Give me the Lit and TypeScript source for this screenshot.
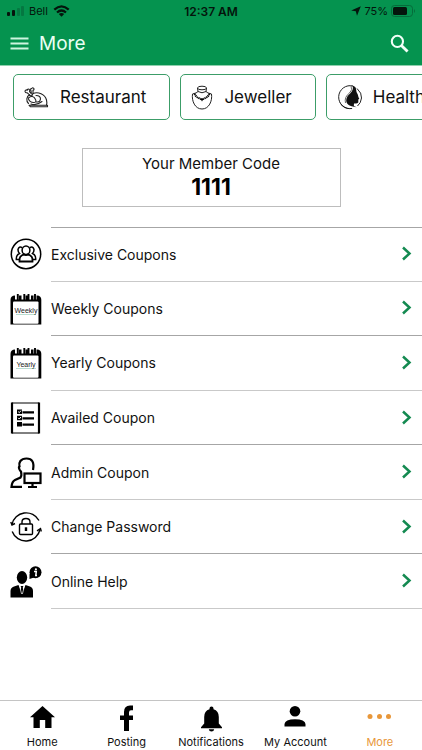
import { LitElement, html, css, svg } from "lit";
import { customElement } from "lit/decorators.js";
import { classMap } from "lit/directives/class-map.js";

const line = (body: unknown, w = 32, h = 32) =>
  html`<svg width=${w} height=${h} viewBox="0 0 ${w} ${h}" aria-hidden="true">${body}</svg>`;

const calendar = (word: string) => line(svg`
  <path d="M0.500 7Q0.500 2.500 5 2.500H27Q31.300 2.500 31.300 7V31.500H0.500Z" fill="#000"/>
  <rect x="3" y="8.500" width="25.500" height="22.300" rx="1" fill="#fff"/>
  <path d="M5 1H9V6.500H5ZM11.500 1H15.500V6.500H11.500ZM18 1H21V6.500H18ZM23.500 1H26.500V6.500H23.500Z" fill="#fff"/>
  <path d="M7.800 1V7M14.300 1V7M18.500 1V7M25 1V7" stroke="#000" stroke-width="1.900"/>
  <path d="M6 21.500H26" stroke="#b9dcd0" stroke-width="1"/>
  <text x="16" y="20" text-anchor="middle" font-family="Liberation Sans, sans-serif" font-size="7" fill="#222">${word}</text>`);

const icons = {
  group: line(svg`<g fill="none" stroke="#000" stroke-width="1.500">
    <circle cx="16" cy="16" r="14.700"/>
    <path d="M12.200 9.600Q9 8 8 11.500Q7.900 14 9.500 15.500Q6 17 6.300 21.500H9M19.800 9.600Q23 8 24 11.500Q24.100 14 22.500 15.500Q26 17 25.700 21.500H23"/>
    <ellipse cx="16" cy="12.300" rx="3.900" ry="4.300" fill="#fff"/>
    <path d="M9.500 23.500C9.300 19 10.500 18 13.800 16.300Q16 18 18.200 16.300C21.500 18 22.700 19 22.500 23.500Z" stroke-width="1.800"/></g>`),
  weekly: calendar("Weekly"),
  yearly: calendar("Yearly"),
  list: line(svg`<path d="M2 0.500V31.500M29 0.500V31.500" stroke="#000" stroke-width="2.200"/>
    <path d="M2 1H29M2 31H29" stroke="#000" stroke-width="1"/>
    <path d="M12.500 10.300H24M12.500 16.300H24M12.500 22.700H24" stroke="#000" stroke-width="2.200"/>
    <path d="M7 7.500H12V12H7ZM7 13.800H12V18.300H7ZM7 20H12V24.500H7Z"/>
    <path d="M8.200 9.600L9.300 10.700L11 8.600M8.200 15.900L9.300 17L11 14.900" fill="none" stroke="#fff" stroke-width="1"/>`),
  admin: line(svg`<g fill="none" stroke="#000" stroke-width="2.200">
    <path d="M23 13C24.500 5 22 1.500 16.500 1.500C10.500 1.500 8.500 5.500 9.500 9.500Q8.500 10 9.300 12Q10 14 11 14.500Q12 18.500 10.500 20.500L5 23Q2 24.500 1.500 29.800H12"/>
    <rect x="14.500" y="16.500" width="16" height="9.500"/>
    <path d="M22.500 26V29.500M18 30H27"/></g>`),
  lock: line(svg`<g fill="none" stroke="#000" stroke-width="1.400">
    <rect x="9.500" y="13" width="13" height="10.500" rx="1"/>
    <path d="M12 13V11Q12 7.500 16 7.500Q20 7.500 20 11V13"/>
    <path d="M2 13.500A14.500 14.500 0 0 1 29 9.500M30 18.500A14.500 14.500 0 0 1 2.200 20.500"/>
    <path d="M0.800 11L2 14L5 12.500M27 19.800L30.500 17.500L31.300 20.500"/>
    <path d="M16 16.300V20" stroke-width="2.400"/></g>`),
  help: line(svg`<ellipse cx="12" cy="11.500" rx="5.200" ry="6.500"/>
    <path d="M0.500 31.500V25Q0.500 21.500 4 20.500L8.500 19L12 27L15.500 19L20 20.500Q23 21.500 23 25V31.500Z"/>
    <path d="M10.600 20H13.400L12.800 21.800L13.600 26L12 29L10.400 26L11.200 21.800Z"/>
    <path d="M9.300 19L11.600 28M14.700 19L12.400 28" stroke="#fff" stroke-width="0.700"/>
    <circle cx="25.500" cy="6.300" r="6"/><path d="M19.500 8V13L24 11.500Z"/>
    <circle cx="25.900" cy="3.300" r="1.100" fill="#fff"/>
    <path d="M24 5.500H26.300L25.800 9.500H27" fill="none" stroke="#fff" stroke-width="1.500"/>`),
  turkey: line(svg`<g fill="none" stroke="#222" stroke-width="1.100" stroke-linecap="round" stroke-linejoin="round">
    <path d="M5 18.200H23.500V19.800H6.500Z"/>
    <path d="M4.500 16.500C1.800 14 2.500 9.500 5.500 7.800L7.500 9.500L9 6.500C14 4.500 21 7 22.500 13Q23.200 16 22.500 18"/>
    <path d="M5.500 7.800L3.300 5.800Q0.800 5.800 1 3.900Q1.800 2.300 3.200 3.300Q3.500 1.600 5 2.200Q6.300 3 5.500 4.600L7.500 6.800M7.300 5.500L6.800 3Q6.200 1.500 8 1.200Q8.600 0.300 9.700 1.300Q10.600 2.600 9 3.300L9 6.500"/>
    <path d="M4.500 11C7 8.500 10 9 11.500 12.500Q13 15.500 9.500 15.500Q6 15.500 4.500 12M12 8.500Q16.500 8.500 16.500 12Q16 15.500 12.500 15M7 17Q12 19 18 14.500"/></g>`, 25, 21),
  necklace: line(svg`<g fill="none" stroke="#222" stroke-width="1">
    <ellipse cx="11" cy="3" rx="4.500" ry="1.800"/>
    <path d="M6.500 3L7 6.500Q6 8 1.500 9C0.500 16 4 24 11 24C18 24 21.500 16 20.500 9Q16 8 15 6.500L15.500 3"/>
    <path d="M7 6.500Q11 9 15 6.500"/></g>
    <path d="M3.500 8.500Q5.500 13.500 11 14Q16.500 13.500 18.500 8.500" fill="none" stroke="#111" stroke-width="2" stroke-dasharray="1.500 0.500"/>
    <path d="M9.500 14H12.500L11 16.500Z"/>`, 22, 25),
  beauty: line(svg`<path d="M16 2A11.500 11.500 0 1 0 15 24.500M20 4.500Q25 9 24.500 14Q24 19 20.500 22" fill="none" stroke="#222" stroke-width="1"/>
    <path d="M15.500 1.500C20.500 3 18.500 6.500 20 9C21.500 11 20.800 12.500 22.300 14.800L21.300 15.500V18.500Q20 20 17.500 19.300C16 21.500 17 22.500 19.500 23.200C12 22.500 8 19.500 9.500 14.500C11 9.500 17.500 8.500 15.500 1.500Z" fill="#111"/>
    <path d="M1.500 15C3 21 8 24.500 16 24.800Q9 26 4.500 21.500Q2 18.500 1.500 15Z" fill="#111"/>
    <path d="M14 2Q16 6 12.500 9Q7 13 8.500 19" fill="none" stroke="#444" stroke-width="0.800"/>`, 25, 26),
  home: line(svg`<path d="M13.500 1L26 12.200H22.500V23H16.200V15H10.800V23H4.500V12.200H1Z"/>`, 27, 26),
  facebook: line(svg`<path d="M10 26V15H6V10.500H10V7Q10 0.500 16 0.500H19V5.300H17Q15 5.300 15 7.500V10.500H19V15H15V26Z"/>`, 25, 26),
  bell: line(svg`<path d="M13.500 1.500Q15.500 1.500 15.500 3.500V4.300Q20.800 5.800 20.800 12V18.500L24 22.300V23.300H3V22.300L6.200 18.500V12Q6.200 5.800 11.500 4.300V3.500Q11.500 1.500 13.500 1.500ZM10.800 24.300H16.200Q15.900 26.600 13.500 26.600Q11.100 26.600 10.800 24.300Z"/>`, 27, 27),
  person: line(svg`<circle cx="12" cy="6.300" r="5.300"/><path d="M1.500 21.500V19Q2 14.500 12 14.300Q22 14.500 22.500 19V21.500Z"/>`, 24, 26),
  dots: line(svg`<g fill="#e8973a"><circle cx="3" cy="11.500" r="2.500"/><circle cx="12.500" cy="11.500" r="2.500"/><circle cx="21.500" cy="11.500" r="2.500"/></g>`, 25, 26),
};

const categories = [
  { label: "Restaurant", icon: icons.turkey },
  { label: "Jeweller", icon: icons.necklace },
  { label: "Health", icon: icons.beauty },
];

const entries = [
  { label: "Exclusive Coupons", icon: icons.group },
  { label: "Weekly Coupons", icon: icons.weekly },
  { label: "Yearly Coupons", icon: icons.yearly },
  { label: "Availed Coupon", icon: icons.list },
  { label: "Admin Coupon", icon: icons.admin },
  { label: "Change Password", icon: icons.lock },
  { label: "Online Help", icon: icons.help },
];

const tabs = [
  { label: "Home", icon: icons.home },
  { label: "Posting", icon: icons.facebook },
  { label: "Notifications", icon: icons.bell },
  { label: "My Account", icon: icons.person },
  { label: "More", icon: icons.dots, active: true },
];

@customElement("app-root")
export class AppRoot extends LitElement {
  static styles = css`
    :host {
      display: flex;
      flex-direction: column;
      min-height: 100vh;
      overflow: hidden;
      background: #fff;
      color: #111;
      font-family: Inter, "Liberation Sans", sans-serif;
    }
    svg { display: block; flex: none; }
    button { font: inherit; color: inherit; background: none; border: 0; padding: 0; }
    a { color: inherit; text-decoration: none; }
    .top { background: #05934f; border-bottom: 1px solid #8fd0ae; }
    .status {
      display: grid;
      grid-template-columns: 1fr auto 1fr;
      align-items: center;
      height: 22px;
      padding: 0 6px;
      font-size: 11px;
      color: #04150c;
    }
    .side { display: flex; align-items: center; gap: 5px; }
    .right { justify-content: flex-end; gap: 3px; }
    .clock { font-size: 12px; font-weight: 600; }
    .bar { display: flex; align-items: center; gap: 10px; height: 43px; padding: 0 13px 0 10px; }
    .title { flex: 1; margin: 0; font-size: 19px; font-weight: 400; color: #e9fff3; }
    .chips { display: flex; gap: 10px; padding: 8px 0 0 13px; overflow: hidden; }
    .chip {
      display: flex;
      flex: none;
      align-items: center;
      gap: 11px;
      box-sizing: border-box;
      height: 46px;
      padding: 0 23px 0 10px;
      border: 1px solid #3c9d68;
      border-radius: 5px;
      font-size: 17px;
    }
    .member {
      align-self: center;
      box-sizing: border-box;
      width: 62%;
      max-width: 259px;
      margin-top: 28px;
      padding: 4px 0 6px;
      border: 1px solid #bdbdbd;
      text-align: center;
    }
    .caption { margin: 0; font-size: 15px; line-height: 22px; }
    .code { margin: 0; font-size: 23px; line-height: 25px; font-weight: 700; color: #000; }
    .list {
      display: flex;
      flex: 1;
      flex-direction: column;
      margin: 20px 0 91px;
      padding: 0;
      list-style: none;
    }
    .item { display: flex; flex: 1 0 40px; }
    .row { display: flex; flex: 1; align-items: center; padding-left: 10px; gap: 9px; }
    .label {
      display: flex;
      flex: 1;
      align-self: stretch;
      align-items: center;
      justify-content: space-between;
      padding-right: 9px;
      border-bottom: 1px solid #c9c9c9;
      font-size: 14px;
    }
    .item:nth-child(even) .label { border-color: #a6a6a6; }
    .item:first-child .label { border-top: 1px solid #a6a6a6; }
    .tabs { display: flex; height: 49px; border-top: 1px solid #c4c4c4; }
    .tab {
      display: flex;
      flex: 1 1 0;
      min-width: 0;
      flex-direction: column;
      align-items: center;
      justify-content: space-between;
      padding: 4px 0 0;
      font-size: 11px;
      line-height: 16px;
      white-space: nowrap;
    }
    .active { color: #e8973a; }
  `;

  render() {
    return html`
      <header class="top">
        <div class="status">
          <div class="side">
            <svg width="18" height="10" viewBox="0 0 18 10" aria-hidden="true">
              <rect x="1" y="6" width="3" height="4" rx="1" fill="#06140d" />
              <rect x="6" y="4" width="3" height="6" rx="1" fill="#06140d" />
              <rect x="11" y="2" width="3" height="8" rx="1" fill="#057741" />
              <rect x="15" y="0" width="3" height="10" rx="1" fill="#057741" />
            </svg>
            <span>Bell</span>
            <svg width="17" height="12" viewBox="0 0 17 12" aria-hidden="true">
              <g fill="none" stroke="#04150c" stroke-width="2.200">
                <path d="M1.300 4.600Q8.500 -2 15.700 4.600" /><path d="M4 7.500Q8.500 3.500 13 7.500" />
              </g>
              <path d="M5.800 9Q8.500 7 11.200 9L8.500 11.800Z" fill="#04150c" />
            </svg>
          </div>
          <span class="clock">12:37 AM</span>
          <div class="side right">
            <svg width="10" height="10" viewBox="0 0 10 10" aria-hidden="true"><path d="M9.800 0.200L6 9.800L4.800 5.200L0.200 4.500Z" fill="#04150c" /></svg>
            <span>75%</span>
            <svg width="25" height="12" viewBox="0 0 25 12" aria-hidden="true">
              <rect x="0.500" y="0.500" width="21" height="11" rx="3" fill="none" stroke="#066b3b" />
              <rect x="2" y="2" width="14" height="8" rx="1.500" fill="#04150c" />
              <path d="M23 4Q25 6 23 8Z" fill="#066b3b" />
            </svg>
          </div>
        </div>
        <div class="bar">
          <button aria-label="Menu">
            <svg width="19" height="13" viewBox="0 0 19 13"><path d="M0.500 1.500H18.500M0.500 6.500H18.500M0.500 11.500H18.500" stroke="#cdf5df" stroke-width="2" /></svg>
          </button>
          <h1 class="title">More</h1>
          <button aria-label="Search">
            <svg width="19" height="19" viewBox="0 0 20 20" fill="none" stroke="#f2fff8"><circle cx="7.800" cy="7.800" r="5.900" stroke-width="2.200" /><path d="M12 12L18.500 18.500" stroke-width="3" /></svg>
          </button>
        </div>
      </header>
      <div class="chips">
        ${categories.map((c) => html`<button class="chip">${c.icon}<span>${c.label}</span></button>`)}
      </div>
      <section class="member">
        <p class="caption">Your Member Code</p>
        <p class="code">1111</p>
      </section>
      <ul class="list">
        ${entries.map((e) => html`
          <li class="item">
            <a class="row" href="#">
              ${e.icon}
              <span class="label">${e.label}
                <svg width="12" height="16" viewBox="0 0 12 16" aria-hidden="true"><path d="M2 1.500L8.500 7.500L2 13.500" fill="none" stroke="#148a51" stroke-width="2.500" /></svg>
              </span>
            </a>
          </li>`)}
      </ul>
      <nav class="tabs">
        ${tabs.map((t) => html`
          <a class=${classMap({ tab: true, active: !!t.active })} href="#">${t.icon}<span>${t.label}</span></a>`)}
      </nav>
    `;
  }
}
